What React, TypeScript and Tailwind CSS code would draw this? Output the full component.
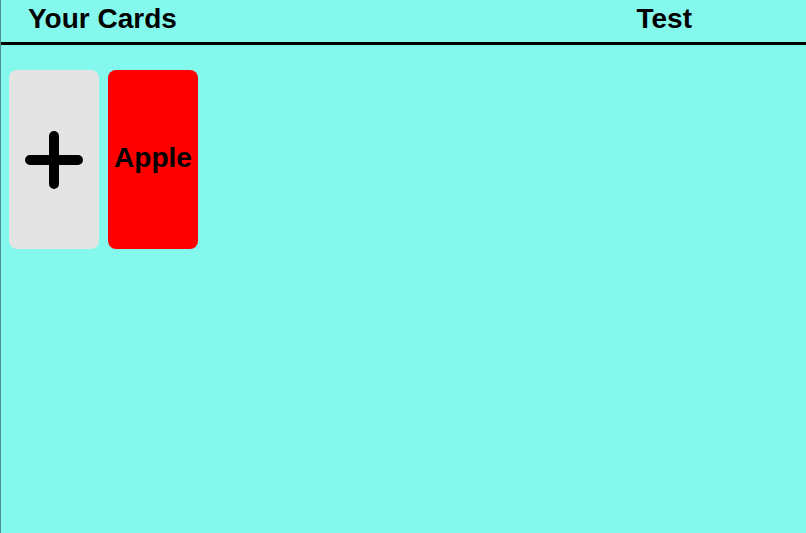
import React from 'react';

export default function App() {
  return (
    <div className="flex min-h-screen flex-col border-l border-[#4d8f8b] bg-[#84f8ec] font-['Liberation_Sans',Arial,sans-serif] text-[28px] leading-8 font-bold text-black">
      <header className="flex h-[45px] items-center justify-between border-b-[3px] border-black pr-[114px] pb-1 pl-[27px]">
        <h1>Your Cards</h1>
        <button type="button">Test</button>
      </header>
      <main className="flex flex-wrap gap-[9px] px-2 pt-[25px]">
        <button type="button" aria-label="Add card" className="flex h-[179px] w-[90px] items-center justify-center rounded-lg bg-[#e4e4e4]">
          <svg width="58" height="58" viewBox="0 0 58 58" fill="none" stroke="black" strokeWidth="10" strokeLinecap="round" aria-hidden="true">
            <path d="M29 5v48M5 29h48" />
          </svg>
        </button>
        <button type="button" className="flex h-[179px] w-[90px] items-center justify-center rounded-lg bg-[#ff0000] pb-1">
          Apple
        </button>
      </main>
    </div>
  );
}
